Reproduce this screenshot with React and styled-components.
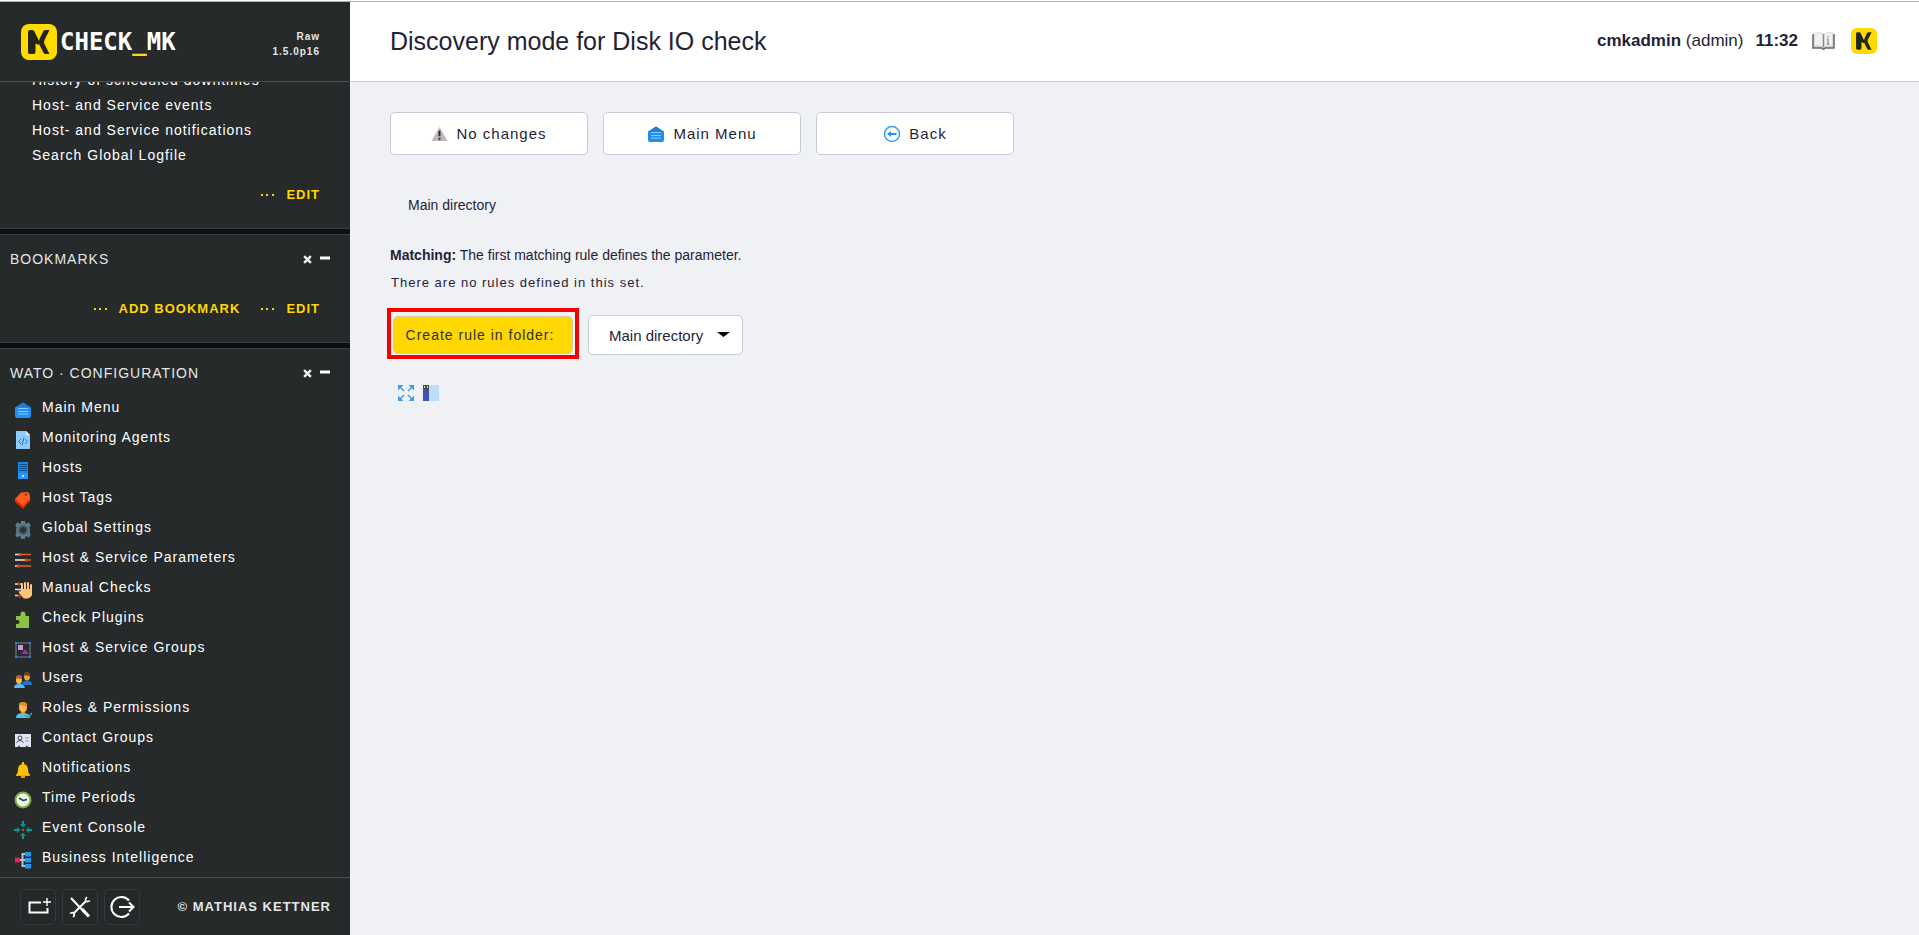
import React from "react";
import styled, { createGlobalStyle } from "styled-components";

const Global = createGlobalStyle`
  *, *::before, *::after { box-sizing: border-box; }
  body {
    margin: 0;
    background: #f0f1f4;
    color: #1f2337;
    font-family: "Liberation Sans", Arial, Helvetica, sans-serif;
    font-size: 14px;
  }
  svg { display: block; flex: none; }
  a { color: inherit; text-decoration: none; }
  ul { list-style: none; margin: 0; padding: 0; }
`;

const Frame = styled.div`
  display: flex;
  flex-direction: column;
  height: 100vh;
  padding-top: 1px;
  background: #fff;
`;

const Page = styled.div`
  display: flex;
  flex: 1;
  min-height: 0;
  border-top: 1px solid #aeb1b2;
`;

const Sidebar = styled.aside`
  display: flex;
  flex-direction: column;
  flex: none;
  width: 350px;
  background: #262a2b;
  color: #fff;
  letter-spacing: 1px;
`;

const SideHead = styled.header`
  display: flex;
  align-items: center;
  justify-content: space-between;
  flex: none;
  height: 80px;
  padding: 0 30px 0 21px;
  border-bottom: 1px solid #4a4e50;
`;

const Brand = styled.a`
  display: flex;
  align-items: center;
  gap: 3px;
`;

const Wordmark = styled.span`
  font: bold 24px/36px "DejaVu Sans Mono", monospace;
  letter-spacing: 0;
  color: #fff;
  span { color: #ffd703; }
`;

const Version = styled.p`
  margin: 4px 0 0;
  font-size: 10px;
  font-weight: bold;
  line-height: 15px;
  text-align: right;
  color: #e4e7e8;
`;

const Snapins = styled.div`
  display: flex;
  flex: 1;
  min-height: 0;
  flex-direction: column;
  justify-content: flex-end;
  gap: 5px;
  overflow: hidden;
  background: #0b0f10;
`;

const Snapin = styled.section`
  flex: none;
  padding-bottom: ${(p) => (p.$last ? 4 : 9)}px;
  background: #262a2b;
  border-top: 1px solid #3b3f41;
  border-bottom: ${(p) => (p.$last ? 0 : 1)}px solid #3b3f41;
`;

const SnapinHead = styled.div`
  display: flex;
  justify-content: space-between;
  padding: 15px 20px 11px 10px;
  line-height: 18px;
`;

const SnapinTitle = styled.h2`
  margin: 0;
  font-size: 14px;
  font-weight: normal;
  color: #e3e6e7;
`;

const SnapinTools = styled.div`
  display: flex;
  gap: 8px;
`;

const IconButton = styled.button`
  display: block;
  padding: 0;
  border: 0;
  background: none;
  cursor: pointer;
`;

const LinkBar = styled.div`
  display: flex;
  justify-content: flex-end;
  gap: 20px;
  padding: 6px 30px 0 0;
`;

const MoreLink = styled.a`
  display: flex;
  align-items: center;
  gap: 11px;
  font-size: 13px;
  font-weight: bold;
  line-height: 48px;
  color: #ffd703;
`;

const ViewList = styled.ul`
  padding: 0 0 0 32px;
  margin-bottom: -3px;
  line-height: 25px;
`;

const NavItem = styled.li`
  a {
    display: flex;
    gap: 10px;
    padding-left: 14px;
    height: 30px;
    line-height: 28px;
  }
  svg { margin-top: 8px; }
`;

const SideFoot = styled.footer`
  display: flex;
  align-items: center;
  flex: none;
  height: 58px;
  padding: 0 19px 0 20px;
  border-top: 1px solid #4a4e50;
`;

const FootTools = styled.div`
  display: flex;
  gap: 6px;
  flex: 1;
`;

const FootButton = styled.button`
  display: grid;
  place-items: center;
  width: 36px;
  height: 36px;
  padding: 0;
  border: 1px solid #363a3c;
  border-radius: 5px;
  background: #25292a;
  cursor: pointer;
`;

const Copyright = styled.a`
  font-size: 13px;
  font-weight: bold;
  color: #e4e7e8;
`;

const Main = styled.main`
  flex: 1;
  min-width: 0;
  background: #f0f1f4;
`;

const TopBar = styled.header`
  display: flex;
  align-items: center;
  justify-content: space-between;
  height: 80px;
  padding: 0 42px 2px 40px;
  background: #fff;
  border-bottom: 1px solid #c8cbd4;
`;

const Title = styled.h1`
  margin: 0;
  font-size: 25px;
  line-height: 30px;
  font-weight: normal;
`;

const UserInfo = styled.div`
  display: flex;
  align-items: center;
  font-size: 17px;
  line-height: 20px;
  white-space: pre;
`;

const Clock = styled.b`
  margin: 0 14px 0 12px;
`;

const HelpLinks = styled.div`
  display: flex;
  align-items: center;
  gap: 16px;
`;

const Content = styled.div`
  padding: 30px 40px;
`;

const Actions = styled.nav`
  display: flex;
  gap: 15px;
`;

const ActionButton = styled.a`
  display: flex;
  align-items: center;
  justify-content: center;
  gap: 8px;
  width: 198px;
  height: 43px;
  border: 1px solid #c8cbd8;
  border-radius: 5px;
  background: #fff;
  font-size: 15px;
  letter-spacing: 1px;
`;

const Crumb = styled.a`
  display: block;
  width: max-content;
  margin: 40px 0 0 18px;
  line-height: 20px;
`;

const Matching = styled.p`
  margin: 30px 0 0;
  line-height: 20px;
`;

const Info = styled.p`
  margin: 8px 0 0 1px;
  font-size: 13px;
  line-height: 20px;
  letter-spacing: 1px;
`;

const RuleForm = styled.form`
  display: flex;
  align-items: center;
  gap: 9px;
  margin: 15px 0 0 -3px;
`;

const Highlight = styled.div`
  padding: 4px 2px 1px;
  border: 4px solid #f60000;
`;

const CreateButton = styled.button`
  display: block;
  width: 180px;
  height: 38px;
  padding: 0 6px 0 0;
  border: 1px solid #d5cfa0;
  border-radius: 5px;
  background: #ffd703;
  color: #33301c;
  font: 14px "Liberation Sans", Arial, sans-serif;
  letter-spacing: 1px;
  cursor: pointer;
`;

const SelectBox = styled.label`
  position: relative;
  display: block;
  margin-top: 3px;
  svg {
    position: absolute;
    right: 13px;
    top: 17px;
    pointer-events: none;
  }
`;

const FolderSelect = styled.select`
  display: block;
  appearance: none;
  width: 155px;
  height: 40px;
  padding: 0 30px 0 20px;
  border: 1px solid #c8cbd8;
  border-radius: 5px;
  background: #fff;
  color: #1f2337;
  font: 15px "Liberation Sans", Arial, sans-serif;
`;

const PageTools = styled.div`
  display: flex;
  gap: 9px;
  margin: 26px 0 0 8px;
`;

const Logo = ({ size }) => (
  <svg width={size} height={size} viewBox="0 0 36 36" aria-hidden="true">
    <rect width="36" height="36" rx="8" fill="#ffdb00" />
    <path d="M7 8Q7 6 9 6h2.500q1.500 0 2.200 2l4.300 9v4l-3.500-1.500V28q0 2-2 2H9q-2 0-2-2z" fill="#24251a" />
    <path d="M28.500 6h-4q-1.500 0-2.300 1.300L18.500 15q-1.300 3 0 6l4 7.700Q23.300 30 24.500 30h4L23.500 20q-1-2 0-4z" fill="#24251a" />
  </svg>
);

const Svg = ({ children, size = 18, box = 18 }) => (
  <svg width={size} height={size} viewBox={`0 0 ${box} ${box}`} fill="none" aria-hidden="true">{children}</svg>
);

const House = () => (
  <Svg>
    <path d="M1 6.500 9 1.500l8 5V15q0 2-2 2H3q-2 0-2-2z" fill="#2190ee" />
    <path d="M2 6.500 9 1.500l7 5z" fill="#1b7fd6" />
    <path d="M4 7.500h10M4 10.500h10M4 13h10" stroke="#8fc9fb" />
  </Svg>
);
const Agent = () => (
  <Svg>
    <path d="M2 0h10l4 4v14H2z" fill="#90caf9" />
    <path d="M12 0v4h4z" fill="#e1f5fe" />
    <path d="M7 8 4.500 10.500 7 13M11 8l2.500 2.500L11 13M10 6.500l-2 8" stroke="#1976d2" />
  </Svg>
);
const Server = () => (
  <Svg>
    <path d="M4 1h10v17H4z" fill="#1e88e5" />
    <path d="M5 3.500h8M5 5.500h8M5 7.500h8M5 9.500h8" stroke="#0b4f94" />
    <path d="M4 12h10v6H4z" fill="#2196f3" />
    <circle cx="9" cy="15" r="1.200" fill="#bbdefb" />
  </Svg>
);
const Tag = () => (
  <Svg>
    <path d="M1 8v3l8 7 7-8V4z" fill="#d32f00" />
    <path d="M1 8 7 1.500 13 1q2 0 2.500 2l.5 5-7 7z" fill="#ff5722" />
    <circle cx="12" cy="3.500" r="1.100" fill="#6d2210" />
  </Svg>
);
const Gear = () => (
  <Svg>
    <circle cx="9" cy="9" r="5" stroke="#607d8b" strokeWidth="4" />
    <path d="M7 0h4l.5 4h-5zM7 18h4l.5-4h-5zM16.800 4.500l-2-3.300-3.300 2.300 2.500 4.300zM1.200 4.500l2-3.300 3.300 2.300L4 7.800zM16.800 13.500l-2 3.300-3.300-2.300 2.500-4.300zM1.200 13.500l2 3.300 3.300-2.300L4 10.200z" fill="#607d8b" />
    <circle cx="9" cy="9" r="4" stroke="#455a64" strokeWidth="2" />
    <circle cx="9" cy="9" r="2.500" fill="#2c3437" />
  </Svg>
);
const Sliders = () => (
  <Svg>
    <path d="M1 3.500h16M1 9h16M1 15h16" stroke="#e4602a" strokeWidth="1.500" />
    <path d="M1 3.500h4M1 9h10M1 15h2" stroke="#d5dce0" strokeWidth="1.500" />
    <path d="M6 2v3M12 7.500v3M4 13.500v3" stroke="#dd4a10" strokeWidth="2.500" />
  </Svg>
);
const Hand = () => (
  <Svg>
    <path d="M1 3h8M1 8.500h7M1 14.500h3" stroke="#e4e8ea" strokeWidth="1.500" />
    <path d="M5 1.500v3M5.500 13v4" stroke="#dd2c00" strokeWidth="2" />
    <path d="M8 11V4M11 10V2M14 10V2M17 11V4" stroke="#ffcc80" strokeWidth="2" strokeLinecap="round" />
    <path d="M7 8h11v6q-1 3-4 3.500h-4Q8 16 4.500 11q1-2 3 0z" fill="#ffc477" />
  </Svg>
);
const Puzzle = () => (
  <Svg>
    <path d="M2 5h4.500V3a2.500 2.500 0 0 1 5 0v2H15v12H2v-4h1.500a2 2 0 0 0 0-4H2z" fill="#8bc34a" />
  </Svg>
);
const Groups = () => (
  <Svg>
    <path d="M2 2h14v14H2z" stroke="#708996" />
    <path d="M1 1h2v2H1zM15 1h2v2h-2zM1 15h2v2H1zM15 15h2v2h-2z" fill="#1e88e5" />
    <path d="M4 4h5v5H4z" fill="#ce93d8" />
    <path d="m7 13 4-5 4 5z" fill="#9c27b0" />
  </Svg>
);
const Users = () => (
  <Svg>
    <path d="M8 12.500q1-3 5-3t5 3V14H8z" fill="#1976d2" />
    <ellipse cx="13" cy="5.500" rx="3" ry="4" fill="#eda03d" />
    <path d="M10 5q-1-4 3-4t3 4q-3 0-4-1z" fill="#6d3f2a" />
    <path d="M0 17q0-4 5-4t6 4z" fill="#4fc3f7" />
    <ellipse cx="5" cy="9" rx="3" ry="4" fill="#ffb74d" />
    <path d="M2 8q-1-4 3-4t3 4q-3 0-4-1z" fill="#ad6524" />
  </Svg>
);
const Roles = () => (
  <Svg>
    <path d="M2 17q0-5 7-5t7 5z" fill="#4fc3f7" />
    <path d="m7 11 2 4 2-4z" fill="#ff9800" />
    <ellipse cx="9" cy="6.500" rx="4" ry="5" fill="#ffb74d" />
    <path d="M5 5Q4 1 9 1t4 4Q9 6 7 3.500z" fill="#e58b22" />
    <path d="m11 14 2.500 2.500L18 12" stroke="#2fb489" strokeWidth="1.500" />
  </Svg>
);
const Contact = () => (
  <Svg>
    <path d="M1 3h16v13h-3l-1-2-1 2H6l-1-2-1 2H1z" fill="#dfe3f2" />
    <circle cx="6" cy="7" r="2" stroke="#3b4550" />
    <path d="M2.500 11.500q3.500-4 7 0" stroke="#3b4550" />
    <path d="M11 7h4M11 10h4" stroke="#90a4ae" />
  </Svg>
);
const Bell = () => (
  <Svg>
    <path d="M8 1h2v2q4 1 4 6 0 3 2 5H2q2-2 2-5 0-5 4-6z" fill="#ffc107" />
    <path d="M2 14h14v1H2z" fill="#ffa000" />
    <path d="M7 15h4v2H7z" fill="#ff9800" />
  </Svg>
);
const ClockIcon = () => (
  <Svg>
    <circle cx="9" cy="9" r="7.500" fill="#f2f6ea" stroke="#7ca947" strokeWidth="2" />
    <path d="m5 7 4 2.500 4-1" stroke="#31382c" strokeWidth="1.500" />
  </Svg>
);
const EventIcon = () => (
  <Svg>
    <path d="M9 0v4M9 18v-4M0 9h4M18 9h-4" stroke="#16998c" strokeWidth="2" />
    <path d="M6 3h6L9 6.500zM6 15h6l-3-3.500zM3 6v6L6.500 9zM15 6v6l-3.500-3z" fill="#009688" />
    <circle cx="9" cy="9" r="1.200" fill="#e53935" />
  </Svg>
);
const TreeIcon = () => (
  <Svg>
    <path d="M5 9h7M12 3H8.500v12H12" stroke="#a9c7d8" strokeWidth="2" />
    <path d="M1 6.500h5v5H1z" fill="#e91e63" />
    <path d="M11 1h6v4.500h-6zM11 7h6v4.500h-6zM11 13h6v4.500h-6z" fill="#2196f3" />
  </Svg>
);
const Dots = () => (
  <svg width="15" height="2" viewBox="0 0 15 2" aria-hidden="true">
    <path d="M1 0h2v2H1zM6 0h2v2H6zM12 0h2v2h-2z" fill="#ffd703" />
  </svg>
);

const More = ({ children }) => (
  <MoreLink href="#"><Dots />{children}</MoreLink>
);

const SnapinHeader = ({ title }) => (
  <SnapinHead>
    <SnapinTitle>{title}</SnapinTitle>
    <SnapinTools>
      <IconButton aria-label={`Remove ${title}`}>
        <Svg size={9} box={8}><path d="m1 1 6 6M7 1 1 7" stroke="#eceeee" strokeWidth="2.200" /></Svg>
      </IconButton>
      <IconButton aria-label={`Collapse ${title}`}>
        <Svg size={10} box={10}><path d="M0 4h10" stroke="#fff" strokeWidth="3" /></Svg>
      </IconButton>
    </SnapinTools>
  </SnapinHead>
);

const views = ["History of scheduled downtimes", "Host- and Service events", "Host- and Service notifications", "Search Global Logfile"];

const wato = [
  [House, "Main Menu"], [Agent, "Monitoring Agents"], [Server, "Hosts"], [Tag, "Host Tags"],
  [Gear, "Global Settings"], [Sliders, "Host & Service Parameters"], [Hand, "Manual Checks"],
  [Puzzle, "Check Plugins"], [Groups, "Host & Service Groups"], [Users, "Users"],
  [Roles, "Roles & Permissions"], [Contact, "Contact Groups"], [Bell, "Notifications"],
  [ClockIcon, "Time Periods"], [EventIcon, "Event Console"], [TreeIcon, "Business Intelligence"],
];

export default function App() {
  return (
    <Frame>
      <Global />
      <Page>
        <Sidebar>
          <SideHead>
            <Brand href="#"><Logo size={36} /><Wordmark>CHECK<span>_</span>MK</Wordmark></Brand>
            <Version>Raw<br />1.5.0p16</Version>
          </SideHead>
          <Snapins>
            <Snapin>
              <ViewList>
                {views.map((v) => <li key={v}><a href="#">{v}</a></li>)}
              </ViewList>
              <LinkBar><More>EDIT</More></LinkBar>
            </Snapin>
            <Snapin>
              <SnapinHeader title="BOOKMARKS" />
              <LinkBar><More>ADD BOOKMARK</More><More>EDIT</More></LinkBar>
            </Snapin>
            <Snapin $last>
              <SnapinHeader title="WATO · CONFIGURATION" />
              <ul>
                {wato.map(([Icon, label]) => (
                  <NavItem key={label}><a href="#"><Icon />{label}</a></NavItem>
                ))}
              </ul>
            </Snapin>
          </Snapins>
          <SideFoot>
            <FootTools>
              <FootButton aria-label="Add snapin">
                <Svg size={26} box={26}>
                  <path d="M16 8.500H4.500v10h18V14" stroke="#fff" strokeWidth="2" />
                  <path d="M22 4v8M18 8h8" stroke="#fff" strokeWidth="1.400" />
                </Svg>
              </FootButton>
              <FootButton aria-label="Edit profile">
                <Svg size={26} box={26}>
                  <path d="m4 4 16 17" stroke="#fff" strokeWidth="2" />
                  <path d="m15 15 7 7.500" stroke="#fff" strokeWidth="3" />
                  <path d="M19 7 6 20" stroke="#fff" strokeWidth="2" />
                  <path d="M20 3q-2.500 2.500-1 4t4-.5M3 19.500q3-2 4 0t-1 3.500" stroke="#fff" strokeWidth="1.500" />
                </Svg>
              </FootButton>
              <FootButton aria-label="Log out">
                <Svg size={26} box={26}>
                  <path d="M20 6.500a10 10 0 1 0 0 13" stroke="#fff" strokeWidth="2" />
                  <path d="M10 13h14M20 8.500l4.500 4.500-4.500 4.500" stroke="#fff" strokeWidth="2" />
                </Svg>
              </FootButton>
            </FootTools>
            <Copyright href="#">© MATHIAS KETTNER</Copyright>
          </SideFoot>
        </Sidebar>
        <Main>
          <TopBar>
            <Title>Discovery mode for Disk IO check</Title>
            <UserInfo>
              <span><b>cmkadmin</b> (admin)</span>
              <Clock>11:32</Clock>
              <HelpLinks>
                <a href="#" aria-label="Manual">
                  <svg width="23" height="18" viewBox="0 0 23 18" fill="none" aria-hidden="true">
                    <path d="M1 2v14h9l1.500 1.500L13 16h9V2" fill="#cfcfcf" stroke="#6a6a6a" strokeWidth="1.500" />
                    <path d="M2.500 1q6-1 9 1 3-2 9-1v13q-6-1-9 1-3-2-9-1z" fill="#f1f1f1" stroke="#dadada" />
                    <path d="M11.500 2v13" stroke="#888" strokeWidth="1.500" />
                    <path d="M16 4v1.500M15 7h1v5M14.500 12h3" stroke="#777" />
                  </svg>
                </a>
                <a href="#" aria-label="Check_MK"><Logo size={26} /></a>
              </HelpLinks>
            </UserInfo>
          </TopBar>
          <Content>
            <Actions>
              <ActionButton href="#">
                <Svg size={17}>
                  <path d="M9 2 17.500 17H.5z" fill="#bdb8b6" />
                  <path d="M9 6v6M9 13.500v2" stroke="#2b2725" strokeWidth="2" />
                </Svg>
                No changes
              </ActionButton>
              <ActionButton href="#"><House />Main Menu</ActionButton>
              <ActionButton href="#">
                <Svg>
                  <circle cx="9" cy="9" r="7.500" stroke="#3d9df0" strokeWidth="1.500" />
                  <path d="M13.500 9H6" stroke="#2a8fe8" strokeWidth="2" />
                  <path d="M4 9l4-3v6z" fill="#2a8fe8" />
                </Svg>
                Back
              </ActionButton>
            </Actions>
            <Crumb href="#">Main directory</Crumb>
            <Matching><b>Matching:</b> The first matching rule defines the parameter.</Matching>
            <Info>There are no rules defined in this set.</Info>
            <RuleForm onSubmit={(e) => e.preventDefault()}>
              <Highlight><CreateButton>Create rule in folder:</CreateButton></Highlight>
              <SelectBox>
                <FolderSelect aria-label="Folder"><option>Main directory</option></FolderSelect>
                <svg width="13" height="5" viewBox="0 0 13 5" aria-hidden="true"><path d="M0 0h13L6.500 5z" fill="#000" /></svg>
              </SelectBox>
            </RuleForm>
            <PageTools>
              <IconButton aria-label="Full screen">
                <Svg size={16} box={16}>
                  <path d="M2 2l4 4M14 2l-4 4M2 14l4-4M14 14l-4-4" stroke="#3d9df0" strokeWidth="1.500" />
                  <path d="M0 0h5.500L0 5.500zM16 0h-5.500L16 5.500zM0 16h5.500L0 10.500zM16 16h-5.500l5.500-5.500z" fill="#3d9df0" />
                </Svg>
              </IconButton>
              <IconButton aria-label="Toggle sidebar">
                <Svg size={16} box={16}>
                  <path d="M0 0h16v16H0z" fill="#bbdefb" />
                  <path d="M0 0h6v16H0z" fill="#3f51b5" />
                  <path d="M0 0h6v4H0z" fill="#45484a" />
                  <path d="M1 1h1v2H1zM4 1h1v2H4z" fill="#e6e0a0" />
                </Svg>
              </IconButton>
            </PageTools>
          </Content>
        </Main>
      </Page>
    </Frame>
  );
}
